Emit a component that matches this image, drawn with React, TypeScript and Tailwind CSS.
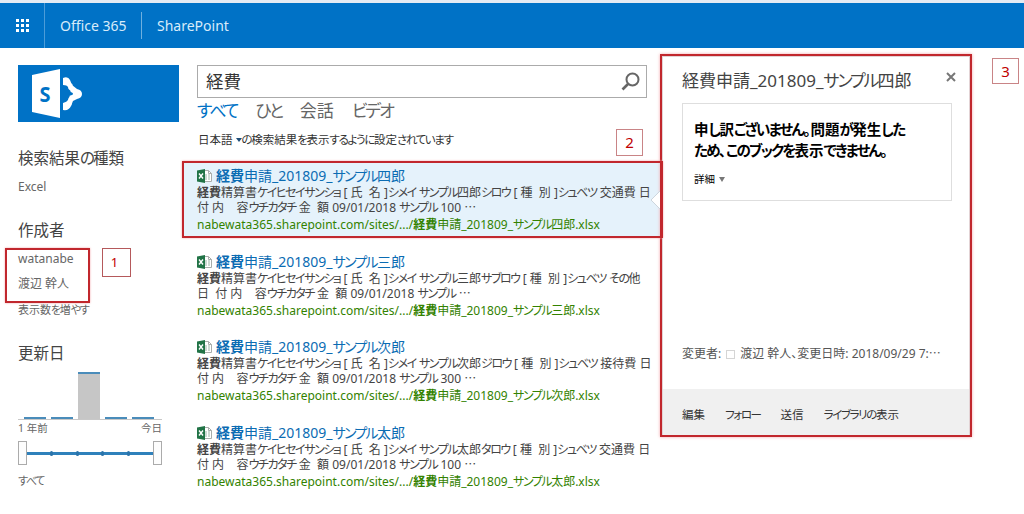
import React from 'react';

interface JaProps {
  children: string;
  kana?: string;
}

// Kana is set tighter than kanji and latin text
const Ja = ({ children, kana = 'tracking-[-0.12em]' }: JaProps) => (
  <>
    {children.split(/([ぁ-んァ-ヶー]+)/).map((part, i) => (
      <span key={i} className={i % 2 ? kana : ''}>{part}</span>
    ))}
  </>
);

interface Result {
  name: string;
  line1: string;
  line2: string;
  active?: boolean;
}

const results: Result[] = [
  {
    name: 'サンプル四郎',
    line1: '精算書ケイヒセイサンショ [ 氏  名 ]シメイ サンプル四郎シロウ [ 種  別 ]シュベツ 交通費 日',
    line2: '付 内    容ウチカタチ 金  額 09/01/2018 サンプル 100 ⋯',
    active: true,
  },
  {
    name: 'サンプル三郎',
    line1: '精算書ケイヒセイサンショ [ 氏  名 ]シメイ サンプル三郎サブロウ [ 種  別 ]シュベツ その他',
    line2: '日  付 内    容ウチカタチ 金  額 09/01/2018 サンプル ⋯',
  },
  {
    name: 'サンプル次郎',
    line1: '精算書ケイヒセイサンショ [ 氏  名 ]シメイ サンプル次郎ジロウ [ 種  別 ]シュベツ 接待費 日',
    line2: '付 内    容ウチカタチ 金  額 09/01/2018 サンプル 300 ⋯',
  },
  {
    name: 'サンプル太郎',
    line1: '精算書ケイヒセイサンショ [ 氏  名 ]シメイ サンプル太郎タロウ [ 種  別 ]シュベツ 交通費 日',
    line2: '付 内    容ウチカタチ 金  額 09/01/2018 サンプル 100 ⋯',
  },
];

const ExcelIcon = () => (
  <svg width="15" height="14" viewBox="0 0 15 14" className="shrink-0">
    <path d="M6 1.5h5.5l3 3v8H6z" fill="#fff" stroke="#a9adab" />
    <path d="M11.5 1.5v3h3" fill="none" stroke="#a9adab" />
    <path d="M8 6h2M11 6h2M8 8h2M11 8h2M8 10h2M11 10h2" stroke="#9bb5a6" />
    <path d="M0 1.5L8 0v14l-8-1.5z" fill="#217346" />
    <path d="M2 4.5l4 5M6 4.5l-4 5" stroke="#fff" strokeWidth="1.4" />
  </svg>
);

const ResultItem = ({ name, line1, line2, active }: Result) => (
  <div className={`h-[75px] w-[476px] pl-[13px] pt-1 whitespace-pre ${active ? 'bg-[#e5f2fb]' : ''}`}>
    <div className="flex h-[18px] items-center text-[14px] leading-[18px] text-[#0b6cb3]">
      <ExcelIcon />
      <span className="ml-1"><b>経費</b><Ja>{`申請_201809_${name}`}</Ja></span>
    </div>
    <div className="h-[15px] text-[12px] leading-[15px] text-[#444]"><b>経費</b><Ja>{line1}</Ja></div>
    <div className="h-[16px] text-[12px] leading-[15px] text-[#444]"><Ja>{line2}</Ja></div>
    <div className="h-[18px] text-[12px] leading-[18px] text-[#338200]">
      nabewata365.sharepoint.com/sites/.../<b>経費</b><Ja>{`申請_201809_${name}.xlsx`}</Ja>
    </div>
  </div>
);

const Header = () => (
  <header className="flex h-12 items-center border-t-[3px] border-[#e4ebf3] bg-[#0072c6] text-[14px] text-[#d8ecfa]">
    <div className="flex h-full w-[45px] items-center justify-center border-r border-[#4c9cd8]">
      <div className="grid grid-cols-3 gap-[2px]">
        {Array.from({ length: 9 }, (_, i) => (
          <span key={i} className="h-[3px] w-[3px] bg-white" />
        ))}
      </div>
    </div>
    <span className="ml-[15px] w-[67px]">Office 365</span>
    <span className="ml-[14px] h-[27px] w-px bg-[#6fb0df]" />
    <span className="ml-[15px]">SharePoint</span>
  </header>
);

const SharePointLogo = () => (
  <div className="h-[57px] w-[161px] bg-[#0072c6]">
    <svg width="66" height="57" viewBox="0 0 66 57">
      <g stroke="#fff" strokeWidth="3" fill="none">
        <path d="M46 17l7 3 1 6 8 3M62 29l-9 3-1 7-6 2" />
      </g>
      <g fill="#fff">
        <path d="M45 13q5-2 7 2l2 5 5 4q5 1 5 5t-5 5l-4 2-2 5q-2 5-8 4v-7q4-1 5-3 0-3 4-4l1-2-1-3q-4-1-4-4-1-2-5-2z" />
        <path d="M14 10l28-6v49l-28-6z" />
      </g>
      <text x="21.5" y="36.5" fill="#0072c6" fontSize="22" fontWeight="700" fontFamily="Open Sans" textLength="11" lengthAdjust="spacingAndGlyphs">S</text>
    </svg>
  </div>
);

const bars = [2, 2, 47, 2, 2];

const Sidebar = () => (
  <aside className="w-[166px] shrink-0 pt-[17px] text-[12px] text-[#666]">
    <SharePointLogo />
    <h2 className="mt-6 h-6 text-[15.5px] leading-6 text-[#444]"><Ja>検索結果の種類</Ja></h2>
    <p className="mt-[7px] h-5 leading-5">Excel</p>
    <h2 className="mt-[21px] h-6 text-[15.5px] leading-6 text-[#444]">作成者</h2>
    <p className="mt-[7px] h-5 leading-5">watanabe</p>
    <p className="mt-[5px] h-5 leading-5">渡辺 幹人</p>
    <p className="mt-[6px] h-5 text-[11px] leading-5"><Ja>表示数を増やす</Ja></p>
    <h2 className="mt-[21px] h-6 text-[15.5px] leading-6 text-[#444]">更新日</h2>
    <div className="mt-[7px] flex h-[48px] w-[144px] items-end gap-[5px] border-b border-[#c8c8c8] pl-[6px]">
      {bars.map((h, i) => (
        <div key={i} className="w-[22px] border-t-2 border-[#4a8cba] bg-[#c6c6c6]" style={{ height: h }} />
      ))}
    </div>
    <div className="flex h-[18px] w-[144px] items-center justify-between text-[10.5px]">
      <span>1 年前</span>
      <span>今日</span>
    </div>
    <div className="mt-[3px] flex h-6 w-[144px] items-center">
      <span className="h-6 w-[9px] border border-[#ababab] bg-[#fdfdfd]" />
      <div className="flex h-[3px] flex-1 items-center justify-evenly bg-[#2f81bb]">
        {[0, 1, 2, 3].map((i) => (
          <span key={i} className="h-[5px] w-[3px] rounded-full bg-[#2a74ab]" />
        ))}
      </div>
      <span className="h-6 w-[9px] border border-[#ababab] bg-[#fdfdfd]" />
    </div>
    <p className="mt-[6px] h-5 text-[11px] leading-5"><Ja>すべて</Ja></p>
  </aside>
);

const Search = () => (
  <main className="w-[476px] shrink-0 pt-[17px]">
    <div className="ml-[13px] flex h-[33px] w-[450px] items-center justify-between border border-[#ababab] pl-2 pr-[6px] text-[17.5px] text-[#333]">
      経費
      <svg width="19" height="19" viewBox="0 0 19 19" fill="none" stroke="#666">
        <circle cx="11.5" cy="7.5" r="6" strokeWidth="2" />
        <path d="M7 12l-5.5 5.5" strokeWidth="2.6" />
      </svg>
    </div>
    <nav className="ml-[13px] mt-[1px] flex h-6 gap-[18px] text-[17px] leading-6 text-[#666]">
      <span className="text-[#0072c6]"><Ja>すべて</Ja></span>
      <span><Ja>ひと</Ja></span>
      <span>会話</span>
      <span><Ja>ビデオ</Ja></span>
    </nav>
    <div className="ml-[14px] mt-[8px] flex h-[18px] items-center text-[11.5px] text-[#333]">
      日本語
      <span className="ml-[3px] h-0 w-0 border-x-[3px] border-t-4 border-x-transparent border-t-[#1f4e79]" />
      <Ja>の検索結果を表示するように設定されています</Ja>
    </div>
    <div className="mt-[14px] flex flex-col gap-[10.6px]">
      {results.map((r) => <ResultItem key={r.name} {...r} />)}
    </div>
  </main>
);

const PreviewPanel = () => (
  <section className="mt-[6px] flex h-[383px] w-[312px] shrink-0 flex-col border-2 border-[#c1272d] shadow-[0_0_3px_#f3a6aa]">
    <div className="flex flex-1 flex-col border border-b-0 border-[#e3d3d5] pl-[19px] pr-[18px]">
      <div className="mt-[10px] flex h-7 items-center justify-between">
        <h2 className="whitespace-nowrap text-[17px] text-[#444]"><Ja>経費申請_201809_サンプル四郎</Ja></h2>
        <svg width="10" height="10" viewBox="0 0 10 10" stroke="#777" strokeWidth="2" className="-mr-[5px] -mt-[9px]">
          <path d="M1 1l8 8M9 1L1 9" />
        </svg>
      </div>
      <div className="mt-[8px] h-[98px] w-[270px] border border-[#dedede] pl-[11px] pt-[15px] text-black">
        <p className="whitespace-nowrap text-[14.5px] font-bold leading-[21px]"><Ja>申し訳ございません。問題が発生した</Ja></p>
        <p className="whitespace-nowrap text-[14.5px] font-bold leading-[21px]"><Ja>ため、このブックを表示できません。</Ja></p>
        <div className="mt-[8px] flex items-center gap-1 text-[10.5px] leading-[20px]">
          詳細
          <span className="h-0 w-0 border-x-[3.5px] border-t-[5px] border-x-transparent border-t-[#777]" />
        </div>
      </div>
      <div className="mt-[143px] flex h-5 items-center whitespace-pre text-[12px] text-[#555]">
        変更者:
        <span className="mx-[5px] h-[9px] w-[9px] border border-[#d5d5d5]" />
        渡辺 幹人、変更日時: 2018/09/29 7:⋯
      </div>
    </div>
    <footer className="flex h-[46px] items-center gap-5 border-x border-[#e3d3d5] bg-[#f0f0f0] pl-[19px] pt-[5px] text-[11.5px] text-[#333]">
      <span>編集</span>
      <span><Ja>フォロー</Ja></span>
      <span>送信</span>
      <span><Ja>ライブラリの表示</Ja></span>
    </footer>
  </section>
);

export default function App() {
  return (
    <div className="relative h-[514px] w-[1024px] overflow-hidden bg-white font-['Noto_Sans','Noto_Sans_CJK_JP',sans-serif] [font-feature-settings:'palt']">
      <Header />
      <div className="flex pl-[18px]">
        <Sidebar />
        <Search />
        <PreviewPanel />
      </div>

      {/* pointer from the selected row to the preview */}
      <svg width="10" height="18" viewBox="0 0 10 18" className="absolute left-[650px] top-[191px]">
        <path d="M10 0L1 9l9 9z" fill="#fff" />
        <path d="M10 0L1 9l9 9" fill="none" stroke="#ccd5dc" />
      </svg>

      <div className="absolute left-[5px] top-[248px] h-[55px] w-[85px] border-2 border-[#c1272d] shadow-[0_0_2px_#f3a6aa]" />
      <div className="absolute left-[182px] top-[161px] h-[77px] w-[481px] border-2 border-[#c1272d] shadow-[0_0_2px_#f3a6aa]" />
      <div className="absolute left-[102px] top-[248px] flex h-[29px] w-[29px] items-center justify-center border border-[#b5595b] pr-1 text-[13px] text-[#c00000]">1</div>
      <div className="absolute left-[616px] top-[129px] flex h-[27px] w-[27px] items-center justify-center border border-[#c98486] text-[15px] text-[#c00000]">2</div>
      <div className="absolute left-[992px] top-[58px] flex h-[26px] w-[27px] items-center justify-center border border-[#c98486] text-[15px] text-[#c00000]">3</div>
    </div>
  );
}
